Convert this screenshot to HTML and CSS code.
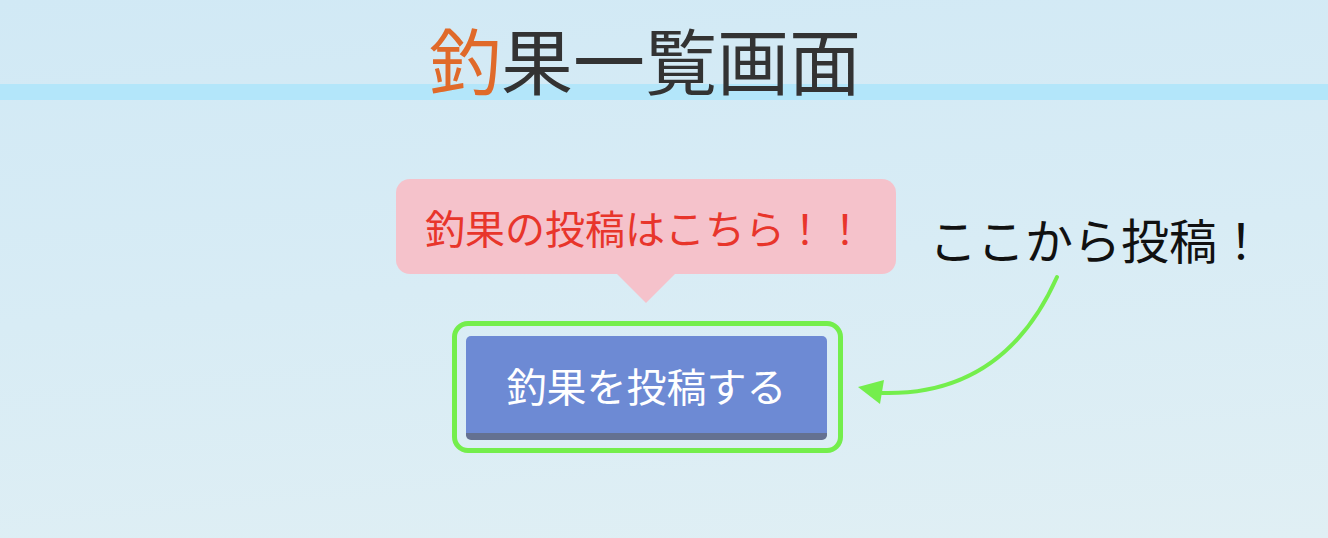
FILE: index.html
```html
<!DOCTYPE html>
<html lang="ja">
<head>
<meta charset="utf-8">
<title>釣果一覧画面</title>
<link rel="stylesheet" href="styles.css">
</head>
<body>
<div class="page">
  <header class="header">
    <h1 class="title"><span class="title-accent">釣</span>果一覧画面</h1>
  </header>
  <main class="stage">
    <div class="post-column">
      <div class="bubble">
        <p class="bubble-text">釣果の投稿はこちら！！</p>
      </div>
      <div class="focus-ring">
        <button class="post-button" type="button">釣果を投稿する</button>
      </div>
    </div>
    <p class="note">ここから投稿！</p>
    <svg class="arrow" width="1328" height="538" viewBox="0 0 1328 538" aria-hidden="true">
      <path d="M1057 277 C1020 360 960 395 882 393" fill="none" stroke="#74ee4c" stroke-width="4" stroke-linecap="round"/>
      <polygon points="858,387 884,380 880,404" fill="#74ee4c"/>
    </svg>
  </main>
</div>
</body>
</html>
```

FILE: styles.css
```css
html, body {
  margin: 0;
  padding: 0;
  height: 100%;
}

body {
  background: linear-gradient(175deg, #d1e9f5 0%, #d8ecf5 50%, #e0eff4 100%);
  font-family: "Noto Sans CJK JP", "Noto Sans", sans-serif;
  overflow: hidden;
}

.page {
  position: relative;
  height: 538px;
}

.header {
  height: 100px;
  background: linear-gradient(to bottom, transparent 0, transparent 84px, #b3e6fa 84px, #b3e6fa 100px);
  display: flex;
  justify-content: center;
  padding-right: 38px;
}

.title {
  margin: 0;
  padding-top: 22px;
  font-size: 72px;
  line-height: 1;
  font-weight: 400;
  color: #333333;
}

.title-accent {
  color: #e06a2a;
}

.stage {
  display: grid;
  grid-template-columns: 1fr auto 1fr;
  padding-top: 79px;
  padding-right: 36px;
}

.post-column {
  grid-column: 2;
  display: flex;
  flex-direction: column;
  align-items: center;
}

.bubble {
  position: relative;
  width: 500px;
  height: 95px;
  background: #f5c2cb;
  border-radius: 14px;
  display: flex;
  align-items: center;
  justify-content: center;
}

.bubble::after {
  content: "";
  position: absolute;
  left: 50%;
  bottom: -29px;
  margin-left: -29px;
  border-left: 29px solid transparent;
  border-right: 29px solid transparent;
  border-top: 29px solid #f5c2cb;
}

.bubble-text {
  margin: 0;
  font-size: 40px;
  line-height: 1;
  color: #e8352b;
  padding-right: 2px;
}

.focus-ring {
  margin: 47px 0 0 3px;
  border: 5px solid #74ee4c;
  border-radius: 16px;
  padding: 10px 11px 8px 9px;
}

.post-button {
  display: block;
  width: 361px;
  height: 104px;
  border: 0;
  border-bottom: 7px solid #647191;
  border-radius: 5px;
  background: #6d8ad4;
  color: #ffffff;
  font-family: "Noto Sans CJK JP", "Noto Sans", sans-serif;
  font-size: 40px;
  line-height: 1;
  padding: 0;
}

.note {
  grid-column: 3;
  margin: 35px 0 0 33px;
  font-size: 48px;
  line-height: 1;
  color: #111111;
  white-space: nowrap;
}

.arrow {
  position: absolute;
  left: 0;
  top: 0;
  pointer-events: none;
}
```
